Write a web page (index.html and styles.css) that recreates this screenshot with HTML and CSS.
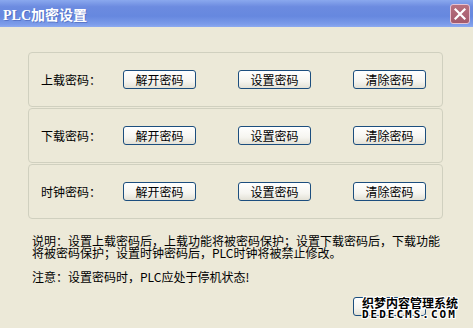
FILE: index.html
```html
<!DOCTYPE html>
<html lang="zh">
<head>
<meta charset="utf-8">
<title>PLC加密设置</title>
<link rel="stylesheet" href="styles.css">
</head>
<body>
<div class="window">
  <div class="titlebar">
    <span class="title">PLC加密设置</span>
    <span class="close">
      <svg width="12" height="12" viewBox="0 0 12 12"><path d="M1.5 1.5 L10.5 10.5 M10.5 1.5 L1.5 10.5" stroke="#fff" stroke-width="2.2" stroke-linecap="square"/></svg>
    </span>
  </div>
  <div class="content">
    <div class="group">
      <span class="label">上载密码：</span>
      <span class="btn">解开密码</span>
      <span class="btn">设置密码</span>
      <span class="btn">清除密码</span>
    </div>
    <div class="group">
      <span class="label">下载密码：</span>
      <span class="btn">解开密码</span>
      <span class="btn">设置密码</span>
      <span class="btn">清除密码</span>
    </div>
    <div class="group">
      <span class="label">时钟密码：</span>
      <span class="btn">解开密码</span>
      <span class="btn">设置密码</span>
      <span class="btn">清除密码</span>
    </div>
    <p class="note">说明：设置上载密码后，上载功能将被密码保护；设置下载密码后，下载功能<br>将被密码保护；设置时钟密码后，PLC时钟将被禁止修改。</p>
    <p class="note warn">注意：设置密码时，PLC应处于停机状态!</p>
    <div class="footer">
      <span class="btn blank"></span>
      <div class="mark">
        <span class="mark-cn">织梦内容管理系统</span>
        <span class="mark-en">DEDECMS.COM</span>
      </div>
    </div>
  </div>
</div>
</body>
</html>
```

FILE: styles.css
```css
html, body {
  margin: 0;
  padding: 0;
  background: #ECE9D8;
}
.window {
  width: 473px;
  height: 328px;
  background: #ECE9D8;
  font-family: "Noto Sans CJK SC", "Liberation Sans", sans-serif;
  font-size: 12px;
  color: #000;
  overflow: hidden;
}
.titlebar {
  height: 27px;
  display: flex;
  align-items: center;
  justify-content: space-between;
  padding: 0 3px 0 3px;
  background: linear-gradient(to bottom, #8AA8EE 0%, #6C8BE0 25%, #6688DF 60%, #7C9CEA 90%, #8DAAF0 100%);
}
.title {
  color: #fff;
  font-family: "Liberation Serif", "Noto Sans CJK SC", serif;
  font-weight: bold;
  font-size: 14px;
  text-shadow: 1px 1px 0 rgba(40, 60, 140, 0.35);
}
.close {
  width: 18px;
  height: 18px;
  margin-top: 1px;
  display: flex;
  align-items: center;
  justify-content: center;
  border: 1px solid #E6C2D2;
  border-radius: 3px;
  background: linear-gradient(to bottom, #B8707E, #A35A6C);
}
.content {
  padding: 25px 30px 0 28px;
}
.group {
  height: 53px;
  margin-bottom: 1px;
  border: 1px solid #D0D0BF;
  border-radius: 4px;
  display: flex;
  align-items: center;
  gap: 42px;
  padding-left: 12px;
}
.label {
  width: 40px;
  white-space: nowrap;
  flex-shrink: 0;
}
.btn {
  flex-shrink: 0;
  box-sizing: border-box;
  width: 73px;
  height: 19px;
  border: 1px solid #1C4E7E;
  border-radius: 3px;
  background: linear-gradient(to bottom, #FFFFFF 0%, #F6F5F0 60%, #E3E1D6 100%);
  display: flex;
  align-items: center;
  justify-content: center;
  line-height: 1;
}
.note {
  margin: 16px 0 0 4px;
  line-height: 12px;
  white-space: nowrap;
}
.warn {
  margin-top: 12px;
}
.footer {
  position: relative;
  margin: 14px 0 0 325px;
  height: 20px;
}
.mark {
  position: absolute;
  left: 9px;
  top: 0;
  display: flex;
  flex-direction: column;
  line-height: 12px;
  font-weight: bold;
  white-space: nowrap;
  color: #000;
  text-shadow: 1px 0 0 #fff, -1px 0 0 #fff, 0 1px 0 #fff, 0 -1px 0 #fff, 1px 1px 0 #fff, -1px -1px 0 #fff, 1px -1px 0 #fff, -1px 1px 0 #fff;
}
.mark-cn {
  font-size: 12px;
}
.mark-en {
  font-family: "DejaVu Sans Mono", monospace;
  font-size: 11px;
  letter-spacing: 2px;
}
```
